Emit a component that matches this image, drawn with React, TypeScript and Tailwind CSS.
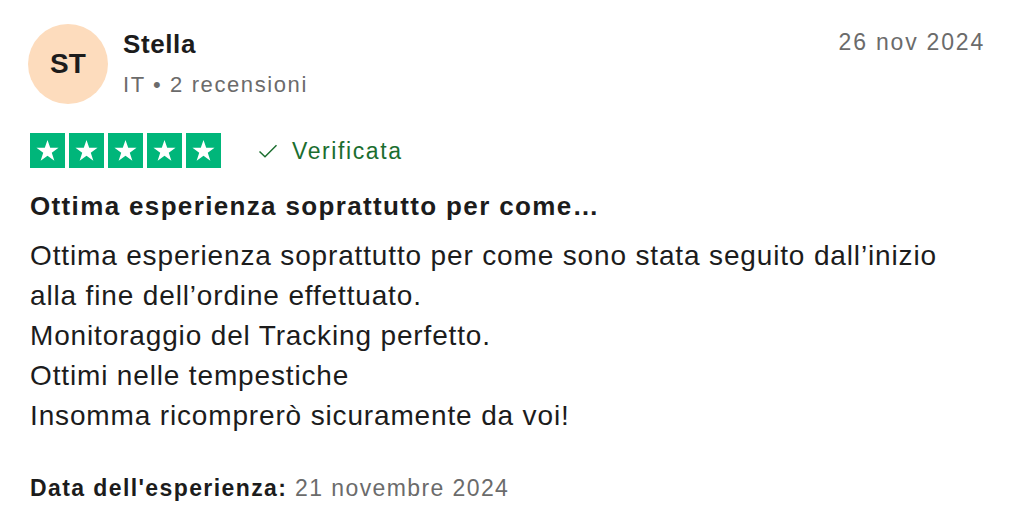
import React from 'react';

const Star = () => (
  <div className="w-[35px] h-[35px] bg-[#00b67a] flex items-center justify-center">
    <svg width="25" height="25" viewBox="0 0 24 24">
      <path
        d="M12 1.8l2.6 7.6h8l-6.5 4.7 2.5 7.7L12 17.1l-6.6 4.7 2.5-7.7L1.4 9.4h8z"
        fill="#ffffff"
      />
    </svg>
  </div>
);

export default function App() {
  return (
    <div className="min-h-screen bg-white text-[#1c1c1c] font-['Liberation_Sans',Arial,sans-serif] pl-[30px] pr-[41px] pt-[24px]">
      {/* header */}
      <div className="flex items-start justify-between">
        <div className="flex items-start gap-[15px] ml-[-2px]">
          <div className="w-[80px] h-[80px] rounded-full bg-[#fddcbd] flex items-center justify-center text-[28px] font-bold text-[#1c1c1c]">
            ST
          </div>
          <div className="flex flex-col mt-[5px]">
            <div className="text-[26px] font-bold leading-[30px] tracking-[0.6px]">Stella</div>
            <div className="text-[22px] leading-[30px] mt-[11px] tracking-[1.6px] text-[#6b6b6b]">IT • 2 recensioni</div>
          </div>
        </div>
        <div className="text-[23px] leading-[30px] tracking-[1.8px] text-[#6b6b6b] mt-[3px] mr-[-2px]">26 nov 2024</div>
      </div>

      {/* rating */}
      <div className="flex items-center mt-[29px]">
        <div className="flex gap-[4px]">
          <Star />
          <Star />
          <Star />
          <Star />
          <Star />
        </div>
        <div className="flex items-center ml-[37px] text-[#1b6e2f] text-[23px] leading-[30px] tracking-[1.6px]">
          <svg width="20" height="20" viewBox="0 0 20 20" className="mr-[14px]">
            <path d="M1.5 10.5l5.5 5.2 11.5-11.5" fill="none" stroke="#1b6e2f" strokeWidth="1.5" />
          </svg>
          Verificata
        </div>
      </div>

      {/* title */}
      <div className="text-[26px] font-bold mt-[23px] leading-[30px] tracking-[1.35px]">
        Ottima esperienza soprattutto per come…
      </div>

      {/* body */}
      <div className="text-[28px] leading-[40px] mt-[15px] tracking-[0.85px]">
        Ottima esperienza soprattutto per come sono stata seguito dall’inizio
        <br />
        alla fine dell’ordine effettuato.
        <br />
        Monitoraggio del Tracking perfetto.
        <br />
        Ottimi nelle tempestiche
        <br />
        Insomma ricomprerò sicuramente da voi!
      </div>

      {/* date of experience */}
      <div className="text-[23px] mt-[37px] leading-[30px] tracking-[1.4px]">
        <span className="font-bold">Data dell'esperienza:</span>{' '}
        <span className="text-[#6b6b6b]">21 novembre 2024</span>
      </div>
    </div>
  );
}
